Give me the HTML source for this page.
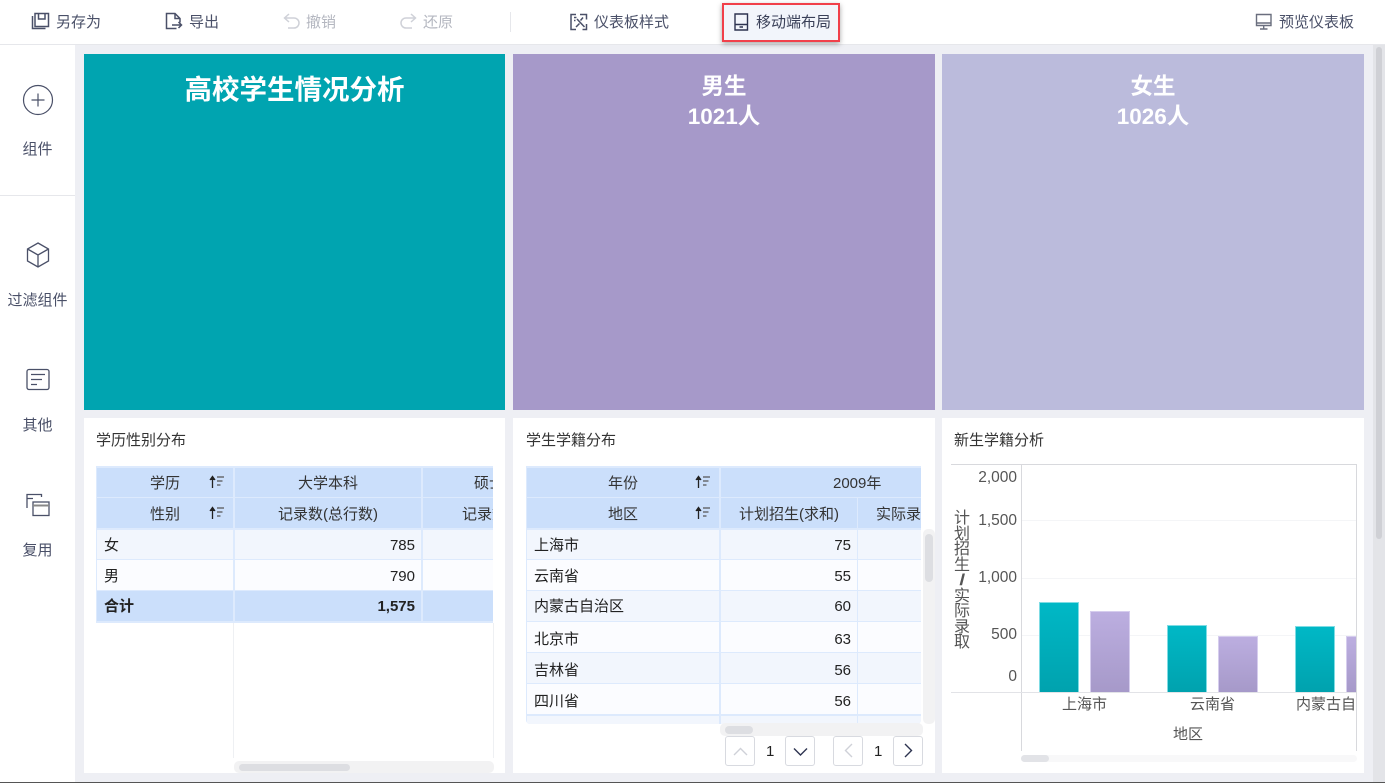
<!DOCTYPE html>
<html lang="zh"><head><meta charset="utf-8"><style>
*{box-sizing:border-box}
html,body{margin:0;padding:0;width:1385px;height:783px;overflow:hidden;background:#eeeff4;font-family:"Liberation Sans","Noto Sans CJK SC",sans-serif;color:#333}
.a{position:absolute}
.t{position:absolute;white-space:nowrap;font-size:15px;line-height:20px;padding-top:1px}
.tb{color:#4a5068}
.dis{color:#b4b7c0}
.side{color:#4a5068;text-align:center;width:75px;left:0}
svg{position:absolute;overflow:visible;fill:none}
.panel{position:absolute;background:#fff}
.big{position:absolute;color:#fff;font-weight:bold;text-align:center;white-space:nowrap}
.h{position:absolute;background:#cbdffb;color:#333;font-size:15px;line-height:30px;padding-top:1px;text-align:center;white-space:nowrap;overflow:hidden}
.h2{padding-top:2px}
.c{position:absolute;font-size:15px;line-height:30px;padding-top:1px;color:#222;white-space:nowrap;overflow:hidden}
.r{text-align:right;padding-right:6px}
.p2{padding-top:2px}
.p3{padding-top:3px}
.sb{position:absolute;border-radius:5px}
.btn{position:absolute;width:30px;height:30px;border:1px solid #d8dae0;border-radius:3px;background:#fff}
.ax{position:absolute;font-size:15px;line-height:18px;color:#555;white-space:nowrap}
.num{font-size:15.500px}
.bt{border:1px solid #7fdce4;border-bottom:0}
.bp{border:1px solid #d6cdee;border-bottom:0}
</style></head><body>

<!-- toolbar -->
<div class="a" style="left:0;top:0;width:1385px;height:45px;background:#fff;border-bottom:1px solid #e6e7eb"></div>
<svg style="left:31px;top:12px" width="20" height="20" stroke="#4a5068" stroke-width="1.500"><path d="M4 1.500h13.500v13H4zM7.500 1.500v5.500h6.500v-5.500M1.500 4v12.500h13"/></svg>
<div class="t tb" style="left:56px;top:12px">另存为</div>
<svg style="left:165px;top:12px" width="20" height="20" stroke="#4a5068" stroke-width="1.500"><path d="M11.500 16.500H1.500V1.500h8.500l5 5v4M10 1.500v5h5M7 13h9.500M13.500 10l3 3-3 3"/></svg>
<div class="t tb" style="left:189px;top:12px">导出</div>
<svg style="left:283px;top:13px" width="18" height="18" stroke="#cfd1d8" stroke-width="1.500"><path d="M6 1L1.500 5 6 9M2 5h9a5 5 0 0 1 0 10H5"/></svg>
<div class="t dis" style="left:306px;top:12px">撤销</div>
<svg style="left:400px;top:13px" width="18" height="18" stroke="#cfd1d8" stroke-width="1.500"><path d="M11 1l4.500 4L11 9M15 5H6a5 5 0 0 0 0 10h6"/></svg>
<div class="t dis" style="left:423px;top:12px">还原</div>
<div class="a" style="left:510px;top:12px;width:1px;height:20px;background:#e6e7eb"></div>
<svg style="left:570px;top:13px" width="18" height="18" stroke="#4a5068" stroke-width="1.500"><path d="M6 1.500H1v15h5M10 1.500h6.500v5M16.500 11v5.500h-4M4 4.500h2.500M4 7.500h1.500M7 6l7.500 8M13 4.500l-2.500 3M9.500 10.500l-3.500 3.500"/></svg>
<div class="t tb" style="left:594px;top:12px">仪表板样式</div>
<div class="a" style="left:722px;top:3px;width:118px;height:39px;background:#f2f5fb;border:2px solid #f1404a;box-shadow:0 2px 5px rgba(0,0,0,.35)"></div>
<svg style="left:734px;top:13px" width="16" height="18" stroke="#2d3350" stroke-width="1.400"><path d="M1 1h12.500v16H1zM1 11.500h12.500M5.500 14h3.500"/></svg>
<div class="t" style="left:756px;top:12px;color:#3a4058">移动端布局</div>
<svg style="left:1255px;top:13px" width="18" height="18" stroke="#6a6e7e" stroke-width="1.400"><path d="M1.500 1.500h14.500v11H1.500zM1.500 10h14.500M8.700 12.500v3.500M5 16h7.500"/></svg>
<div class="t tb" style="left:1279px;top:12px">预览仪表板</div>

<!-- sidebar -->
<div class="a" style="left:0;top:45px;width:75px;height:737px;background:#fff"></div>
<div class="a" style="left:0;top:195px;width:75px;height:1px;background:#e6e7eb"></div>
<svg style="left:23px;top:85px" width="30" height="30" stroke="#4a5068" stroke-width="1.200"><circle cx="15" cy="15" r="14.500"/><path d="M8.500 15h13M15 8.500v13"/></svg>
<div class="t side" style="top:139px">组件</div>
<svg style="left:26px;top:242px" width="24" height="26" stroke="#4a5068" stroke-width="1.300"><path d="M12 1l10.500 6v12l-10.500 6-10.500-6v-12zM1.500 7l10.500 6 10.500-6M12 13v12"/></svg>
<div class="t side" style="top:290px">过滤组件</div>
<svg style="left:26px;top:369px" width="24" height="22" stroke="#4a5068" stroke-width="1.300"><rect x="1" y=".5" width="22" height="20" rx="2"/><path d="M5 5.500h14M5 10.500h11M5 15.500h6"/></svg>
<div class="t side" style="top:415px">其他</div>
<svg style="left:26px;top:493px" width="24" height="24" stroke="#4a5068" stroke-width="1.300"><path d="M1 15V1.500h14.500V4M1 5.500h6"/><rect x="7" y="9" width="16" height="13.500"/><path d="M7 12.500h16" stroke="#888" stroke-width="2"/></svg>
<div class="t side" style="top:540px">复用</div>

<!-- top tiles -->
<div class="a" style="left:84px;top:54px;width:421px;height:356px;background:#00a4b0"></div>
<div class="big" style="left:84px;top:72px;width:421px;font-size:27.500px;line-height:36px">高校学生情况分析</div>
<div class="a" style="left:513px;top:54px;width:422px;height:356px;background:#a699c9"></div>
<div class="big" style="left:513px;top:72px;width:422px;font-size:22.500px;line-height:30px">男生<br>1021人</div>
<div class="a" style="left:942px;top:54px;width:422px;height:356px;background:#bbbbdc"></div>
<div class="big" style="left:942px;top:72px;width:422px;font-size:22.500px;line-height:30px">女生<br>1026人</div>

<!-- panels -->
<div class="panel" style="left:84px;top:418px;width:421px;height:355px"></div>
<div class="panel" style="left:513px;top:418px;width:422px;height:355px"></div>
<div class="panel" style="left:942px;top:418px;width:422px;height:355px"></div>
<div class="t" style="left:96px;top:430px">学历性别分布</div>
<div class="t" style="left:526px;top:430px">学生学籍分布</div>
<div class="t" style="left:954px;top:430px">新生学籍分析</div>

<!-- table 1 -->
<div class="a" style="left:96px;top:466px;width:397px;height:157px;background:#ddeafd;overflow:hidden">
<div class="h" style="left:1px;top:2px;width:136px;height:29px;line-height:29px">学历</div>
<div class="h" style="left:139px;top:2px;width:186px;height:29px;line-height:29px;background:#cbdffb">大学本科</div>
<div class="h" style="left:327px;top:2px;width:70px;height:29px;line-height:29px;text-align:left;padding-left:51px">硕士</div>
<div class="h h2" style="left:1px;top:32px;width:136px;height:30px">性别</div>
<div class="h h2" style="left:139px;top:32px;width:186px;height:30px">记录数(总行数)</div>
<div class="h h2" style="left:327px;top:32px;width:70px;height:30px;text-align:left;padding-left:39px">记录数</div>
<div class="c" style="left:1px;top:64px;width:136px;height:29px;background:#f2f6fd;padding-left:7px;line-height:29px">女</div>
<div class="c r" style="left:139px;top:64px;width:186px;height:29px;background:#f2f6fd;line-height:29px">785</div>
<div class="c" style="left:327px;top:64px;width:70px;height:29px;background:#f2f6fd"></div>
<div class="c p2" style="left:1px;top:94px;width:136px;height:30px;background:#fbfcff;padding-left:7px">男</div>
<div class="c r p2" style="left:139px;top:94px;width:186px;height:30px;background:#fbfcff">790</div>
<div class="c" style="left:327px;top:94px;width:70px;height:30px;background:#fbfcff"></div>
<div class="c" style="left:1px;top:125px;width:136px;height:30px;background:#cbdffb;padding-left:7px;font-weight:bold">合计</div>
<div class="c r" style="left:139px;top:125px;width:186px;height:30px;background:#cbdffb;font-weight:bold">1,575</div>
<div class="c" style="left:327px;top:125px;width:70px;height:30px;background:#cbdffb"></div>
</div>
<svg style="left:209px;top:475px" width="16" height="14" stroke="#222" stroke-width="1.300"><path d="M3.500 13V2M1 5l2.500-3.500L6 5" fill="#222"/><path d="M8 2h7M8 6h5.500M8 10h3.500" stroke="#555"/></svg>
<svg style="left:209px;top:506px" width="16" height="14" stroke="#222" stroke-width="1.300"><path d="M3.500 13V2M1 5l2.500-3.500L6 5" fill="#222"/><path d="M8 2h7M8 6h5.500M8 10h3.500" stroke="#555"/></svg>
<div class="a" style="left:233px;top:623px;width:1px;height:135px;background:#eef0f3"></div>
<div class="a" style="left:493px;top:623px;width:1px;height:135px;background:#eef0f3"></div>
<div class="sb" style="left:234px;top:761px;width:260px;height:12px;background:#f2f2f3"></div>
<div class="sb" style="left:239px;top:764px;width:111px;height:7px;background:#dddee2"></div>

<!-- table 2 -->
<div class="a" style="left:526px;top:466px;width:395px;height:258px;background:#ddeafd;overflow:hidden;border-radius:0 0 4px 4px">
<div class="h" style="left:1px;top:2px;width:192px;height:29px;line-height:29px">年份</div>
<div class="h" style="left:195px;top:2px;width:200px;height:29px;line-height:29px;text-align:left;padding-left:112px">2009年</div>
<div class="h h2" style="left:1px;top:32px;width:192px;height:30px">地区</div>
<div class="h h2" style="left:195px;top:32px;width:136px;height:30px">计划招生(求和)</div>
<div class="h h2" style="left:332px;top:32px;width:63px;height:30px;text-align:left;padding-left:18px">实际录取</div>

<div class="c" style="left:1px;top:64px;width:192px;height:29px;line-height:29px;background:#f2f6fd;padding-left:7px">上海市</div>
<div class="c r" style="left:195px;top:64px;width:136px;height:29px;line-height:29px;background:#f2f6fd">75</div>
<div class="c" style="left:332px;top:64px;width:63px;height:29px;background:#f2f6fd"></div>

<div class="c p2" style="left:1px;top:94px;width:192px;height:30px;background:#fbfcff;padding-left:7px">云南省</div>
<div class="c r p2" style="left:195px;top:94px;width:136px;height:30px;background:#fbfcff">55</div>
<div class="c" style="left:332px;top:94px;width:63px;height:30px;background:#fbfcff"></div>

<div class="c" style="left:1px;top:125px;width:192px;height:30px;background:#f2f6fd;padding-left:7px">内蒙古自治区</div>
<div class="c r" style="left:195px;top:125px;width:136px;height:30px;background:#f2f6fd">60</div>
<div class="c" style="left:332px;top:125px;width:63px;height:30px;background:#f2f6fd"></div>

<div class="c p3" style="left:1px;top:156px;width:192px;height:30px;background:#fbfcff;padding-left:7px">北京市</div>
<div class="c r p3" style="left:195px;top:156px;width:136px;height:30px;background:#fbfcff">63</div>
<div class="c" style="left:332px;top:156px;width:63px;height:30px;background:#fbfcff"></div>

<div class="c p3" style="left:1px;top:187px;width:192px;height:30px;background:#f2f6fd;padding-left:7px">吉林省</div>
<div class="c r p3" style="left:195px;top:187px;width:136px;height:30px;background:#f2f6fd">56</div>
<div class="c" style="left:332px;top:187px;width:63px;height:30px;background:#f2f6fd"></div>

<div class="c p3" style="left:1px;top:218px;width:192px;height:30px;background:#fbfcff;padding-left:7px">四川省</div>
<div class="c r p3" style="left:195px;top:218px;width:136px;height:30px;background:#fbfcff">56</div>
<div class="c" style="left:332px;top:218px;width:63px;height:30px;background:#fbfcff"></div>

<div class="c" style="left:1px;top:250px;width:192px;height:8px;background:#f2f6fd"></div>
<div class="c" style="left:195px;top:250px;width:136px;height:8px;background:#f2f6fd"></div>
<div class="c" style="left:332px;top:250px;width:63px;height:8px;background:#f2f6fd"></div>
</div>
<svg style="left:695px;top:475px" width="16" height="14" stroke="#222" stroke-width="1.300"><path d="M3.500 13V2M1 5l2.500-3.500L6 5" fill="#222"/><path d="M8 2h7M8 6h5.500M8 10h3.500" stroke="#555"/></svg>
<svg style="left:695px;top:506px" width="16" height="14" stroke="#222" stroke-width="1.300"><path d="M3.500 13V2M1 5l2.500-3.500L6 5" fill="#222"/><path d="M8 2h7M8 6h5.500M8 10h3.500" stroke="#555"/></svg>
<div class="sb" style="left:923px;top:529px;width:12px;height:195px;background:#f2f2f3"></div>
<div class="sb" style="left:925px;top:534px;width:8px;height:48px;background:#dddee2"></div>
<div class="sb" style="left:720px;top:723px;width:203px;height:13px;background:#f2f2f3"></div>
<div class="sb" style="left:725px;top:726px;width:28px;height:8px;background:#dddee2"></div>

<div class="btn" style="left:725px;top:736px"></div>
<svg style="left:733px;top:747px" width="15" height="9" stroke="#cfd1d8" stroke-width="1.400"><path d="M1 8l6.500-6.500L14 8"/></svg>
<div class="t" style="left:766px;top:741px;color:#222">1</div>
<div class="btn" style="left:785px;top:736px"></div>
<svg style="left:793px;top:747px" width="15" height="9" stroke="#2d3350" stroke-width="1.400"><path d="M1 1.500L7.500 8 14 1.500"/></svg>
<div class="btn" style="left:833px;top:736px"></div>
<svg style="left:844px;top:743px" width="9" height="15" stroke="#cfd1d8" stroke-width="1.400"><path d="M8 1L1.500 7.500 8 14"/></svg>
<div class="t" style="left:874px;top:741px;color:#222">1</div>
<div class="btn" style="left:893px;top:736px"></div>
<svg style="left:904px;top:743px" width="9" height="15" stroke="#2d3350" stroke-width="1.400"><path d="M1 1l6.500 6.500L1 14"/></svg>

<!-- chart -->
<div class="a" style="left:951px;top:464px;width:406px;height:1px;background:#d8d9dd"></div>
<div class="a" style="left:1021px;top:464px;width:1px;height:287px;background:#d8d9dd"></div>
<div class="a" style="left:1356px;top:464px;width:1px;height:287px;background:#d8d9dd"></div>
<div class="a" style="left:1022px;top:520px;width:334px;height:1px;background:#f4f5f7"></div>
<div class="a" style="left:1022px;top:578px;width:334px;height:1px;background:#f4f5f7"></div>
<div class="a" style="left:1022px;top:635px;width:334px;height:1px;background:#f4f5f7"></div>
<div class="a" style="left:951px;top:692px;width:405px;height:1px;background:#e2e3e7"></div>
<div class="a bt" style="left:1039px;top:602px;width:40px;height:90px;background:linear-gradient(#00b8c6,#00a2ae)"></div>
<div class="a bp" style="left:1090px;top:611px;width:40px;height:81px;background:linear-gradient(#bcaee0,#a699c9)"></div>
<div class="a bt" style="left:1167px;top:625px;width:40px;height:67px;background:linear-gradient(#00b8c6,#00a2ae)"></div>
<div class="a bp" style="left:1218px;top:636px;width:40px;height:56px;background:linear-gradient(#bcaee0,#a699c9)"></div>
<div class="a bt" style="left:1295px;top:626px;width:40px;height:66px;background:linear-gradient(#00b8c6,#00a2ae)"></div>
<div class="a bp" style="left:1346px;top:636px;width:10px;height:56px;border-right:0;background:linear-gradient(#bcaee0,#a699c9)"></div>
<div class="ax num" style="left:960px;width:57px;text-align:right;top:469px">2,000</div>
<div class="ax num" style="left:960px;width:57px;text-align:right;top:512px">1,500</div>
<div class="ax num" style="left:960px;width:57px;text-align:right;top:569px">1,000</div>
<div class="ax num" style="left:960px;width:57px;text-align:right;top:626px">500</div>
<div class="ax num" style="left:960px;width:57px;text-align:right;top:668px">0</div>
<div class="ax" style="left:953px;top:511px;width:18px;line-height:15.500px;font-size:16px;text-align:center">计<br>划<br>招<br>生<br><span style="display:inline-block;transform:scaleX(1.300);font-weight:bold">/</span><br>实<br>际<br>录<br>取</div>
<div class="ax" style="left:1062px;top:696px">上海市</div>
<div class="ax" style="left:1190px;top:696px">云南省</div>
<div class="ax" style="left:1296px;top:696px;width:60px;overflow:hidden">内蒙古自治区</div>
<div class="ax" style="left:1173px;top:726px">地区</div>
<div class="sb" style="left:1021px;top:755px;width:336px;height:7px;background:#f8f8f9"></div>
<div class="sb" style="left:1021px;top:755px;width:28px;height:7px;background:#e2e3e7"></div>

<!-- page scrollbar -->
<div class="a" style="left:1373px;top:45px;width:12px;height:737px;background:#e3e4e8"></div>
<div class="sb" style="left:1376px;top:47px;width:6px;height:492px;background:#cfd0d5"></div>
<div class="a" style="left:0;top:782px;width:1385px;height:1px;background:#555"></div>
</body></html>
